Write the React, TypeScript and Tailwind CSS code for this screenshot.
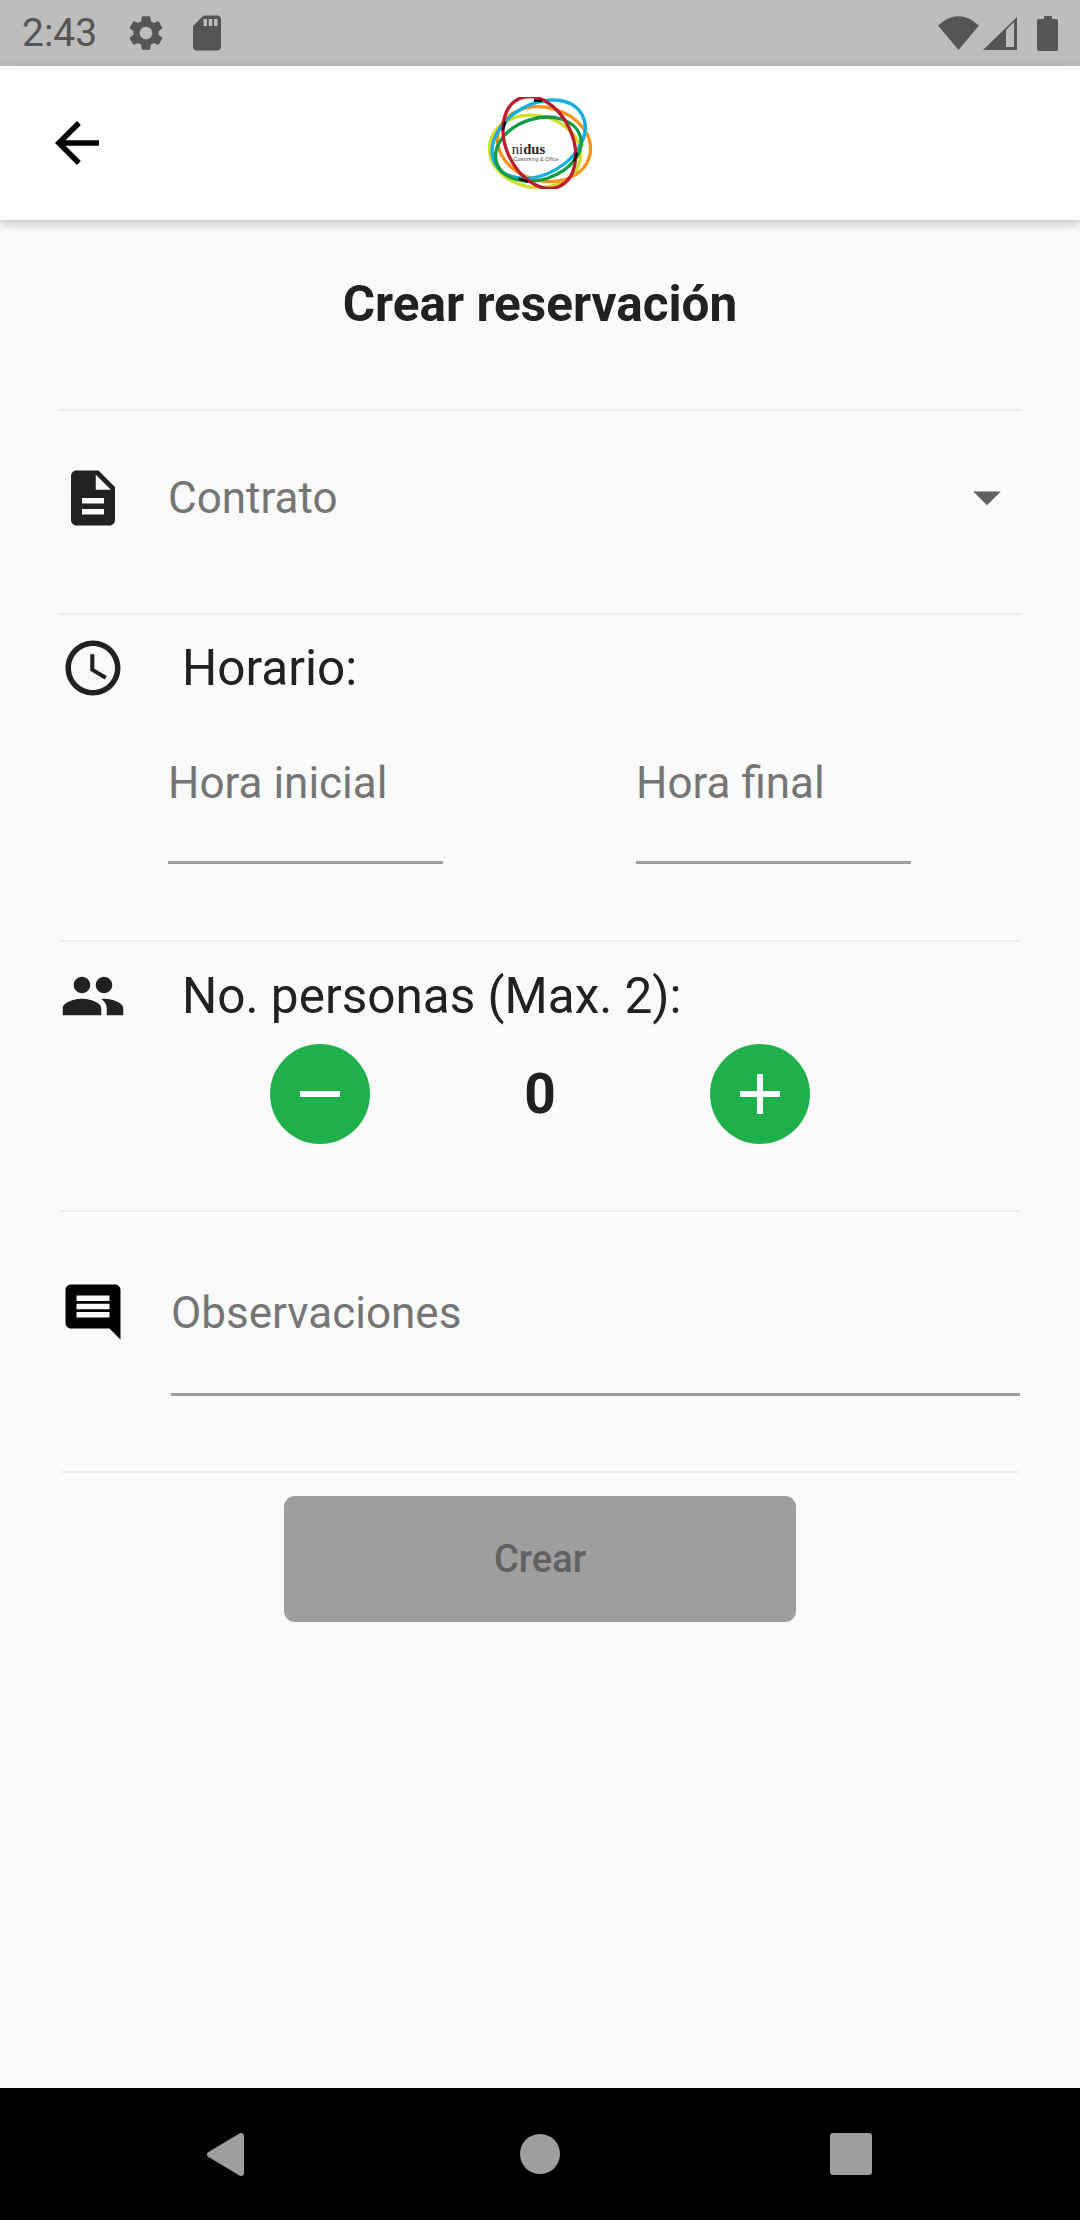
import { MdArrowBack, MdSettings, MdSdCard, MdDescription, MdAccessTime, MdPeople, MdComment } from 'react-icons/md'

function Logo() {
  return (
    <svg width="104" height="92" viewBox="85 48 310 277" fill="none" strokeWidth="10">
      <ellipse cx="225" cy="212" rx="138" ry="108" stroke="#d4dc2a" transform="rotate(10 225 212)" />
      <ellipse cx="252" cy="190" rx="142" ry="110" stroke="#f7941e" transform="rotate(15 252 190)" />
      <ellipse cx="236" cy="175" rx="150" ry="105" stroke="#12aee0" transform="rotate(-30 236 175)" />
      <ellipse cx="235" cy="205" rx="132" ry="92" stroke="#0f9b48" transform="rotate(-18 235 205)" />
      <ellipse cx="238" cy="185" rx="100" ry="145" stroke="#bd1e2d" transform="rotate(-25 238 185)" />
      <path d="M222 58 L246 60 M128 148 L136 122 M176 294 L204 303 M342 242 L352 216" stroke="#111111" strokeWidth="8" />
      <text x="155" y="220" fontFamily="'Liberation Serif', serif" fontSize="44" fill="#222222">
        ni<tspan fontWeight="700">dus</tspan>
      </text>
      <text x="160" y="240" fontFamily="'Liberation Sans', sans-serif" fontSize="16" fill="#555555">
        Coworking &amp; Office
      </text>
    </svg>
  )
}

function StatusBar() {
  return (
    <div className="flex h-[66px] items-center bg-[#bdbdbd] pl-[22px] pr-[22px] text-[#555555]">
      <span className="w-[103px] text-[39px] leading-none">2:43</span>
      <MdSettings size={42} className="mr-[19px]" />
      <MdSdCard size={42} />
      <div className="ml-auto flex items-center">
        <svg width="41" height="34" viewBox="0 0 41 34" fill="currentColor">
          <path d="M0 9.5 Q20.5 -9 41 9.5 L20.5 34 Z" />
        </svg>
        <svg className="ml-[4px]" width="34" height="33" viewBox="0 0 34 33" fill="currentColor" fillRule="evenodd">
          <path d="M0 33 L34 0 V33 Z M23 13 L31 5 V30 H23 Z" />
        </svg>
        <svg className="ml-[20px]" width="21" height="35" viewBox="0 0 21 35" fill="currentColor">
          <path d="M7 0 H15 V3 H19 Q21 3 21 5 V33 Q21 35 19 35 H2 Q0 35 0 33 V5 Q0 3 2 3 H7 Z" />
        </svg>
      </div>
    </div>
  )
}

function AppBar() {
  return (
    <div className="relative z-10 flex h-[154px] items-center justify-center bg-white shadow-[0_4px_10px_rgba(0,0,0,0.22)]">
      <MdArrowBack size={66} color="#000000" className="absolute left-[44px] top-[44px]" />
      <Logo />
    </div>
  )
}

function NavBar() {
  return (
    <div className="flex h-[132px] items-center bg-black pl-[207px]">
      <svg width="37" height="43" viewBox="0 0 37 43" fill="#9e9e9e" stroke="#9e9e9e" strokeWidth="6" strokeLinejoin="round">
        <path d="M3 21.5 L34 3 V40 Z" />
      </svg>
      <div className="ml-[276px] h-[40px] w-[40px] rounded-full bg-[#9e9e9e]" />
      <div className="ml-[270px] h-[42px] w-[42px] rounded-[3px] bg-[#9e9e9e]" />
    </div>
  )
}

function TimeField({ label }: { label: string }) {
  return (
    <div className="h-[109px] w-[275px] border-b-[3px] border-[#9e9e9e] pt-[3px] text-[44px] leading-[50px] text-[#757575]">
      {label}
    </div>
  )
}

export default function App() {
  return (
    <div className="flex h-[2220px] w-[1080px] flex-col bg-[#fafafa] font-['Roboto',sans-serif] text-[#212121]">
      <StatusBar />
      <AppBar />
      <main className="flex-1 px-[60px]">
        <h1 className="flex h-[189px] items-start justify-center pt-[56px] text-[49.5px] font-bold leading-[56px]">Crear reservación</h1>

        {/* Contrato */}
        <section className="flex h-[204px] border-t-2 border-[#eeeeee] pt-[54px]">
          <MdDescription size={66} />
          <span className="ml-[42px] mt-[8px] text-[44px] leading-[50px] text-[#757575]">Contrato</span>
          <svg className="ml-auto -mt-[1px]" width="66" height="66" viewBox="0 0 24 24" fill="#616161">
            <path d="M7 10l5 5 5-5z" />
          </svg>
        </section>

        {/* Horario */}
        <section className="h-[327px] border-t-2 border-[#eeeeee] pt-[20px]">
          <div className="flex">
            <MdAccessTime size={66} />
            <span className="ml-[56px] text-[49.5px] leading-[66px]">Horario:</span>
          </div>
          <div className="ml-[108px] mt-[54px] flex gap-[193px]">
            <TimeField label="Hora inicial" />
            <TimeField label="Hora final" />
          </div>
        </section>

        {/* Personas */}
        <section className="h-[270px] border-t-2 border-[#eeeeee] pt-[21px]">
          <div className="flex">
            <MdPeople size={66} />
            <span className="ml-[56px] text-[49.5px] leading-[66px]">No. personas (Max. 2):</span>
          </div>
          <div className="ml-[210px] mt-[15px] flex items-center">
            <button className="flex h-[100px] w-[100px] items-center justify-center rounded-full bg-[#1fb04c]">
              <span className="h-[6px] w-[40px] bg-white" />
            </button>
            <span className="w-[340px] text-center text-[55px] font-bold leading-none">0</span>
            <button className="relative flex h-[100px] w-[100px] items-center justify-center rounded-full bg-[#1fb04c]">
              <span className="h-[6px] w-[40px] bg-white" />
              <span className="absolute h-[40px] w-[6px] bg-white" />
            </button>
          </div>
        </section>

        {/* Observaciones */}
        <section className="flex h-[261px] border-t-2 border-[#eeeeee] pt-[64px]">
          <MdComment size={66} color="#000000" className="mt-[3px]" />
          <div className="ml-[45px] h-[120px] flex-1 border-b-[3px] border-[#9e9e9e] pt-[12px] text-[44px] leading-[50px] text-[#757575]">
            Observaciones
          </div>
        </section>

        <div className="border-t-2 border-[#eeeeee] pt-[23px]">
          <button className="mx-auto block h-[126px] w-[512px] rounded-[11px] bg-[#9e9e9e] text-[38px] font-medium text-[#616161]">Crear</button>
        </div>
      </main>
      <NavBar />
    </div>
  )
}
